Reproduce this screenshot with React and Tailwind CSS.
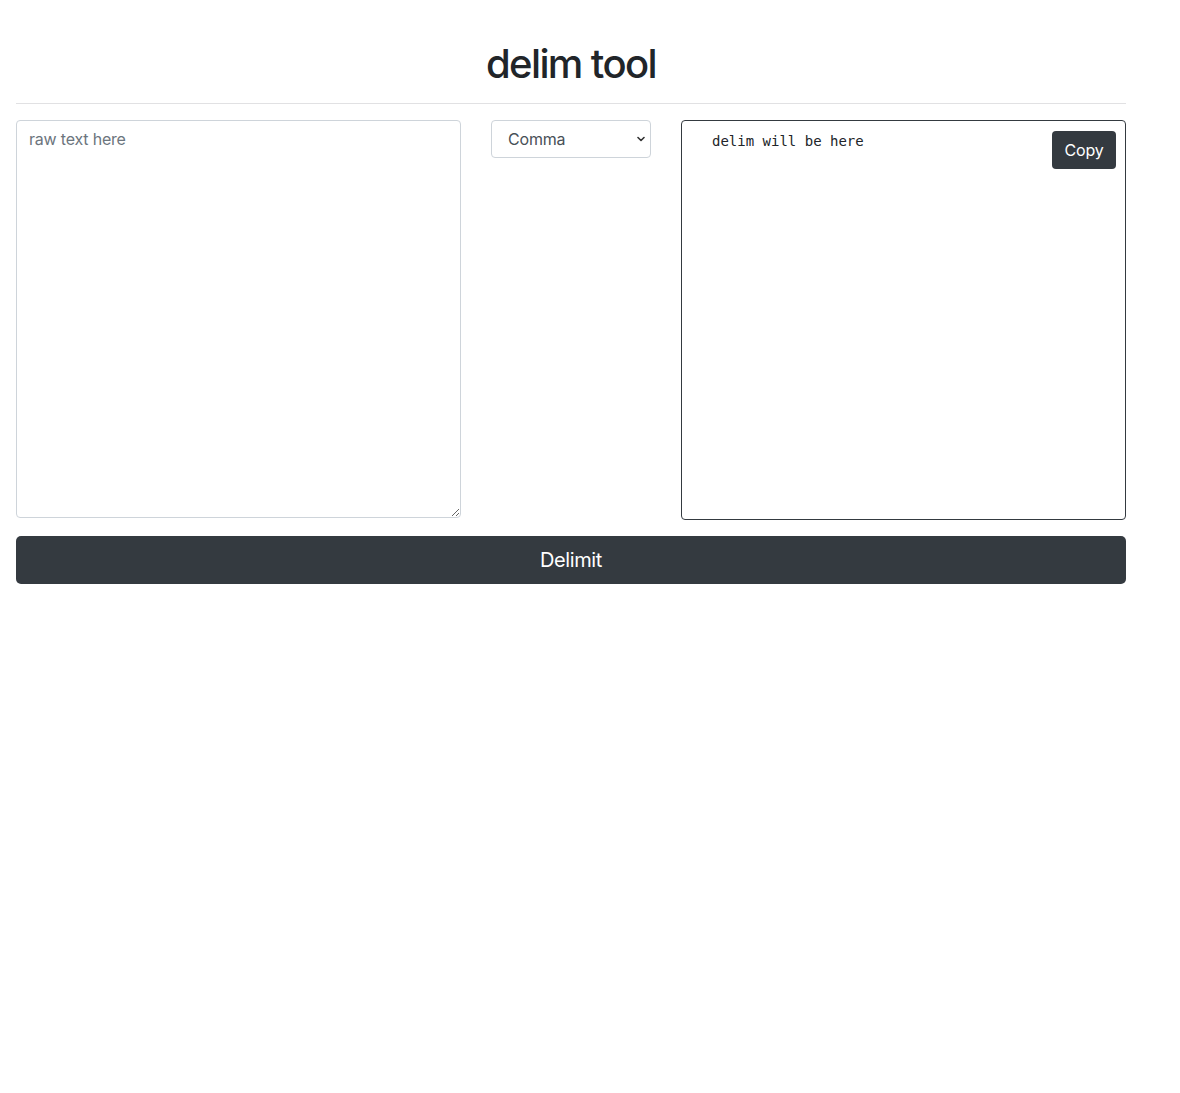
import React from "react";

export default function App() {
  return (
    <div className="min-h-[1093px] bg-white text-[#212529]" style={{ fontFamily: "Inter, 'Liberation Sans', sans-serif" }}>
      <div className="w-[1110px] ml-[16px] pt-[40px]">
        <h1 className="text-center text-[40px] font-medium leading-[48px] tracking-[-1.6px] mb-[15px]">delim tool</h1>
        <hr className="border-0 border-t border-[#e1e1e3] mb-[16px]" />
        <div className="grid grid-cols-[445px_1fr_445px] gap-[30px] items-start">
          <textarea
            placeholder="raw text here"
            className="block w-[445px] h-[398px] border border-[#ced4da] rounded-[4px] px-[12px] py-[6px] text-[16px] leading-[24px] tracking-[-0.2px] text-[#495057] placeholder:text-[#6c757d] outline-none"
          />
          <div className="relative w-[160px]">
            <select className="appearance-none w-full h-[38px] border border-[#ced4da] rounded-[4px] pl-[16px] pr-[28px] text-[16px] tracking-[-0.2px] text-[#495057] bg-white outline-none">
              <option>Comma</option>
            </select>
            <svg className="absolute right-[6px] top-[16px] pointer-events-none" width="8" height="6" viewBox="0 0 8 6">
              <path d="M1 1.5 L4 4.5 L7 1.5" fill="none" stroke="#333" strokeWidth="1.6" strokeLinecap="round" strokeLinejoin="round" />
            </svg>
          </div>
          <div className="relative h-[400px] border border-[#343a40] rounded-[4px]">
            <pre className="pl-[30px] pt-[11px] text-[14px] leading-[18px] text-[#212529]" style={{ fontFamily: "'DejaVu Sans Mono', 'Liberation Mono', monospace" }}>delim will be here</pre>
            <button className="absolute top-[10px] right-[9px] w-[64px] h-[38px] bg-[#343a40] text-white text-[16px] tracking-[-0.2px] rounded-[4px]">Copy</button>
          </div>
        </div>
        <button className="mt-[16px] w-full h-[48px] bg-[#343a40] text-white text-[20px] tracking-[-0.4px] rounded-[5px]">Delimit</button>
      </div>
    </div>
  );
}
